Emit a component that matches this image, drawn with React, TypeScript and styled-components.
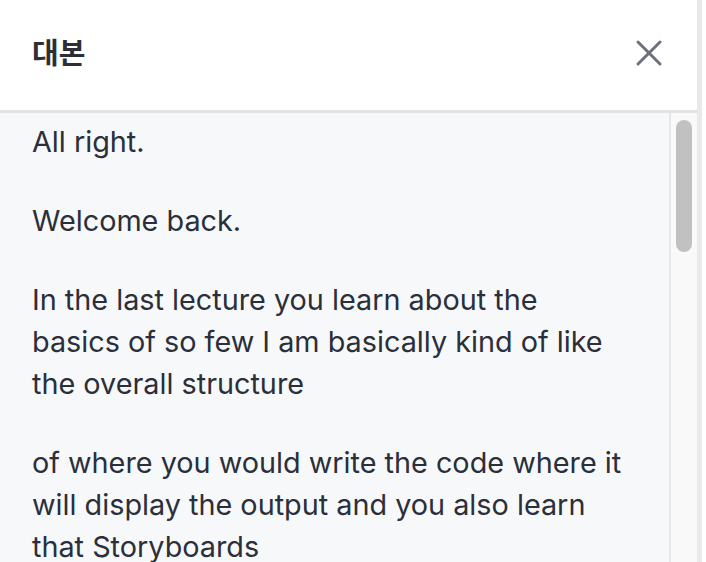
import * as React from "react"
import styled, { createGlobalStyle } from "styled-components"

const GlobalStyle = createGlobalStyle`
  html, body {
    margin: 0;
    padding: 0;
    background: #ffffff;
  }
  body {
    font-family: Inter, "Noto Sans", "Noto Sans CJK KR", sans-serif;
    -webkit-font-smoothing: antialiased;
  }
`

const paragraphs: string[][] = [
  ["All right."],
  ["Welcome back."],
  [
    "In the last lecture you learn about the",
    "basics of so few I am basically kind of like",
    "the overall structure",
  ],
  [
    "of where you would write the code where it",
    "will display the output and you also learn",
    "that Storyboards",
  ],
  [
    "are where you can drag and drop elements",
    "onto the screen and see how they look.",
  ],
]

const Panel = styled.div`
  width: 697px;
  height: 562px;
  border-right: 5px solid #e9e9ea;
  display: flex;
  flex-direction: column;
  overflow: hidden;
`

const Header = styled.header`
  height: 110px;
  flex: none;
  display: flex;
  align-items: center;
  justify-content: space-between;
  padding: 0 32px 0 32px;
  background: #ffffff;
  border-bottom: 3px solid #e2e3e5;
`

const Title = styled.h2`
  margin: 0;
  padding-bottom: 8px;
  font-family: "Noto Sans CJK KR", sans-serif;
  font-weight: 700;
  font-size: 29px;
  color: #2d2f36;
`

const CloseButton = styled.button`
  width: 30px;
  height: 30px;
  margin-right: 1px;
  margin-bottom: 4px;
  padding: 0;
  border: none;
  background: none;
  display: flex;
  align-items: center;
  justify-content: center;
  cursor: pointer;
`

const Body = styled.div`
  flex: 1;
  display: flex;
  min-height: 0;
  background: #f7f8fa;
`

const Transcript = styled.div`
  flex: 1;
  padding: 8px 20px 0 32px;
  overflow: hidden;
  border-right: 2px solid #e6e7e9;
`

const Paragraph = styled.p`
  margin: 0 0 37px;
  font-size: 28.8px;
  line-height: 42px;
  color: #2a2f3a;
  white-space: nowrap;
`

const Track = styled.div`
  width: 26px;
  flex: none;
  background: #f9f9f9;
  padding-top: 7px;
`

const Thumb = styled.div`
  width: 16px;
  height: 132px;
  margin: 0 auto;
  border-radius: 8px;
  background: #c1c1c1;
`

export default function App() {
  return (
    <>
      <GlobalStyle />
      <Panel>
        <Header>
          <Title>대본</Title>
          <CloseButton aria-label="닫기">
            <svg width="28" height="28" viewBox="0 0 28 28">
              <path
                d="M3 3 L25 25 M25 3 L3 25"
                stroke="#6b707b"
                strokeWidth="3"
                strokeLinecap="round"
              />
            </svg>
          </CloseButton>
        </Header>
        <Body>
          <Transcript>
            {paragraphs.map((lines, i) => (
              <Paragraph key={i}>
                {lines.map((line, j) => (
                  <React.Fragment key={j}>
                    {line}
                    {j < lines.length - 1 && <br />}
                  </React.Fragment>
                ))}
              </Paragraph>
            ))}
          </Transcript>
          <Track>
            <Thumb />
          </Track>
        </Body>
      </Panel>
    </>
  )
}
